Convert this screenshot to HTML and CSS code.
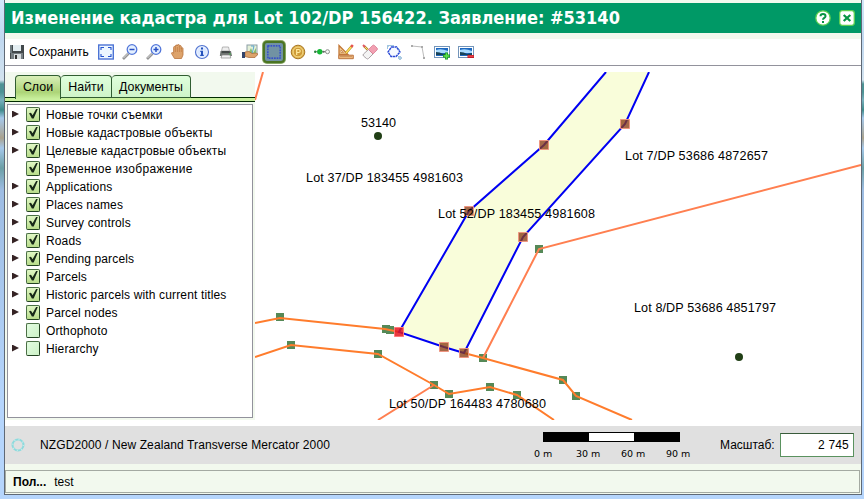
FILE: index.html
```html
<!DOCTYPE html>
<html lang="ru">
<head>
<meta charset="utf-8">
<title>Изменение кадастра</title>
<link rel="stylesheet" href="styles.css">
</head>
<body>
<div class="window">
  <header class="titlebar">
    <h1>Изменение кадастра для Lot 102/DP 156422. Заявление: #53140</h1>
    <svg class="title-btn" viewBox="0 0 16 16"><circle cx="8" cy="8" r="7.2" fill="#fff" stroke="#5ed052" stroke-width="1.3"/><path d="M5.5 6.2C5.5 3.3 10.5 3.3 10.5 6.2C10.5 8 8 7.8 8 9.8M8 11v2" fill="none" stroke="#079443" stroke-width="2"/></svg>
    <svg class="title-btn" viewBox="0 0 16 16"><rect x=".7" y=".7" width="14.6" height="14.6" rx="2.5" fill="#fff" stroke="#5ed052" stroke-width="1.3"/><path d="M4.7 5l6.6 6M11.3 5l-6.6 6" stroke="#079443" stroke-width="2.3"/></svg>
  </header>

  <div class="toolbar">
    <button class="save"><svg class="icon" viewBox="0 0 16 16"><path d="M1 1h14v14H1z" fill="#42484b"/><path d="M4 1h8v6H4z" fill="#e4eef2"/><path d="M2 9h12v6H2z" fill="#777f83"/><path d="M5 10h7v5H5z" fill="#d7dcde"/><path d="M6 11h2v4H6z" fill="#333"/><path d="M1 1h2v8H1z" fill="#707b80"/></svg><span>Сохранить</span></button>
    <button class="tool"><svg class="icon" viewBox="0 0 16 16"><rect x=".7" y="1" width="14.6" height="14" fill="#edf7ff" stroke="#4c73d5" stroke-width="1.4"/><path d="M3 6V3.500h3M10 3.500h3V6M13 10v2.500h-3M6 12.500H3V10" fill="none" stroke="#2453cf" stroke-width="1.1"/></svg></button>
    <button class="tool"><svg class="icon" viewBox="0 0 16 16"><path d="M1 15l5.500-5.500" stroke="#949494" stroke-width="2.600"/><path d="M1.500 14l5-5" stroke="#ddd"/><circle cx="10" cy="5.500" r="4.800" fill="#e4f0ff" stroke="#5377da" stroke-width="1.300"/><path d="M7.500 5.500h5" stroke="#2850c5" stroke-width="1.500"/></svg></button>
    <button class="tool"><svg class="icon" viewBox="0 0 16 16"><path d="M1 15l5.500-5.500" stroke="#949494" stroke-width="2.600"/><path d="M1.500 14l5-5" stroke="#ddd"/><circle cx="10" cy="5.500" r="4.800" fill="#e4f0ff" stroke="#5377da" stroke-width="1.300"/><path d="M7.500 5.500h5M10 3v5" stroke="#2850c5" stroke-width="1.500"/></svg></button>
    <button class="tool"><svg class="icon" viewBox="0 0 16 16"><path d="M4.500 14.500L1.700 9.800C1 8.500 2.700 8 3.600 9.200V3.400c0-1.300 1.800-1.300 1.800 0V2c0-1.300 2-1.300 2 0V1.300c0-1.200 2-1.200 2 0V2.500c0-1.300 1.900-1.200 1.900 0v2c0-1.200 1.700-1.100 1.700 0V11l-1.500 3.500z" fill="#dda36b" stroke="#b9743c" stroke-width=".8"/><path d="M5.400 4v4M7.400 3v5M9.400 3v5M11.300 4v4" stroke="#b9743c" stroke-width=".6"/></svg></button>
    <button class="tool"><svg class="icon" viewBox="0 0 16 16"><circle cx="8" cy="8" r="6.500" fill="#eef4ff" stroke="#5275d1" stroke-width="1.200"/><circle cx="8" cy="8" r="4.800" fill="#dce9ff"/><path d="M7 3.500h2v2H7zM6.300 6.800H9v4h.8v1.300H6.200v-1.300H7V8h-.7z" fill="#2352bd"/></svg></button>
    <button class="tool"><svg class="icon" viewBox="0 0 16 16"><path d="M4.500 3h6l1 4h-8z" fill="#eee" stroke="#999" stroke-width=".7"/><path d="M2.500 7h10.500l1 5H1.800z" fill="#707572"/><path d="M4 7h7.500l.5 2h-8.500z" fill="#424846"/><path d="M4 11h8l.8 3H3z" fill="#f3f3f3" stroke="#888" stroke-width=".7"/><path d="M11 10h2" stroke="#43b34b"/></svg></button>
    <button class="tool"><svg class="icon" viewBox="0 0 16 16"><rect x="5" y="1" width="10" height="10" fill="#e4f0d8" stroke="#8c9ea5"/><path d="M6 10l3-6 2 5 3-5v6z" fill="#87bd70"/><path d="M9 2h3l-2 8" fill="none" stroke="#5ca5cf"/><path d="M3 8l4-.5 3 2 4-.5 2 1-3 3.500H7l-4-1z" fill="#dca36b" stroke="#ae7040" stroke-width=".8"/><path d="M0 8h3v6H0z" fill="#33446b"/></svg></button>
    <button class="tool active"><svg class="icon" viewBox="0 0 16 16"><rect x="1" y="1" width="14" height="14" fill="none" stroke="#2339d5" stroke-width="1.300" stroke-dasharray="2 1"/></svg></button>
    <button class="tool"><svg class="icon" viewBox="0 0 16 16"><circle cx="8" cy="8" r="6.800" fill="#deb24e" stroke="#a87623"/><circle cx="8" cy="8" r="4.900" fill="#cf9b38" stroke="#f6dc8b"/><path d="M6.700 11V5.500h2c2 0 2 3 0 3h-2" fill="none" stroke="#ffeb9e" stroke-width="1.200"/></svg></button>
    <button class="tool"><svg class="icon" viewBox="0 0 16 16"><path d="M1 7.700h14" stroke="#788079"/><circle cx="1.200" cy="7.700" r="1.200" fill="#2a803d"/><circle cx="5.800" cy="7.700" r="2.700" fill="#15b736"/><circle cx="13.500" cy="7.700" r="2" fill="#f6f6f6" stroke="#8b918b"/><circle cx="9.600" cy="7.700" r="1" fill="#666"/></svg></button>
    <button class="tool"><svg class="icon" viewBox="0 0 16 16"><path d="M1 1.500l9 9H1z" fill="#f0c991" stroke="#c37736" stroke-width="1.300"/><path d="M3 6v2.500h2.500z" fill="#fff" stroke="#c37736" stroke-width=".7"/><path d="M.7 11.200h14.600v3.500H.7z" fill="#edb67a" stroke="#bc7540"/><path d="M3 12v1M5 12v1M7 12v1M9 12v1M11 12v1M13 12v1" stroke="#865123" stroke-width=".6"/><path d="M8 9l6-7" stroke="#b48a22" stroke-width="2.600"/><path d="M8 9l6-7" stroke="#ffe25c" stroke-width="1.200"/><path d="M13.200 3l1.600-2" stroke="#e6504e" stroke-width="2.500"/></svg></button>
    <button class="tool"><svg class="icon" viewBox="0 0 16 16"><path d="M2 2l6 6" stroke="#af8728" stroke-width="2.400"/><path d="M2 2l6 6" stroke="#f9df72"/><path d="M1 1l2 2" stroke="#e25a65" stroke-width="2"/><path d="M1.500 10l5-4.500 4.500 4.500-4.500 4.500q-1 1-2 0l-3-2.500q-1-1 0-2z" fill="#f4f4f4" stroke="#a9a2a5"/><path d="M6.500 5.500l4-4q1-1 2 0l2.500 2.500q1 1 0 2l-4 4z" fill="#f2a0b2" stroke="#d87c92" stroke-width=".8"/></svg></button>
    <button class="tool"><svg class="icon" viewBox="0 0 16 16"><path d="M1.500 5V1.500H8M10 2l4 4M11 11l3 3" stroke="#9fc3df" fill="none"/><path d="M5.500 3h5l3.500 5-4 4.500H5L2 8z" fill="#f7faff" stroke="#2948d5" stroke-width="1.400" stroke-dasharray="2.500 .5"/><circle cx="2" cy="2" r="1" fill="#9fc3df"/><circle cx="14" cy="14" r="1.300" fill="#fff" stroke="#75a8cf"/></svg></button>
    <button class="tool"><svg class="icon" viewBox="0 0 16 16"><path d="M2 2l10 1 2 11" fill="none" stroke="#bbb"/><path d="M1 1h2v2H1zM11 2h2v2h-2zM13 13h2v2h-2z" fill="#aaa"/></svg></button>
    <button class="tool"><svg class="icon" viewBox="0 0 16 16"><rect x=".5" y="2.500" width="15" height="11" fill="#fff" stroke="#7395ba"/><path d="M2 4h12v8H2z" fill="#1d68c0"/><path d="M2 6q5-2 12 1v2H2z" fill="#a8dbff"/><path d="M2 8q4 0 7 2l5-1v2H2z" fill="#174359"/><path d="M12.500 8.500v7M9 12h7" stroke="#168d25" stroke-width="3"/><path d="M12.500 9.200v5.600M9.700 12h5.600" stroke="#5ce34e" stroke-width="1.600"/></svg></button>
    <button class="tool"><svg class="icon" viewBox="0 0 16 16"><rect x=".5" y="2.500" width="15" height="11" fill="#fff" stroke="#7395ba"/><path d="M2 4h12v8H2z" fill="#1d68c0"/><path d="M2 6q5-2 12 1v2H2z" fill="#a8dbff"/><path d="M2 8q4 0 7 2l5-1v2H2z" fill="#174359"/><path d="M9.500 12.500h6.500" stroke="#c51c28" stroke-width="3"/><path d="M10 12.200h5.500" stroke="#f25555"/></svg></button>
  </div>

  <main class="workspace">
    <aside class="sidebar">
      <nav class="tabs"><span class="tab layers selected">Слои</span><span class="tab find">Найти</span><span class="tab docs">Документы</span></nav>
      <ul class="tree">
        <li><i class="arrow"></i><b class="check on"></b><span>Новые точки съемки</span></li>
        <li><i class="arrow"></i><b class="check on"></b><span>Новые кадастровые объекты</span></li>
        <li><i class="arrow"></i><b class="check on"></b><span>Целевые кадастровые объекты</span></li>
        <li><i class="arrow none"></i><b class="check on"></b><span class="loose">Временное изображение</span></li>
        <li><i class="arrow"></i><b class="check on"></b><span>Applications</span></li>
        <li><i class="arrow"></i><b class="check on"></b><span>Places names</span></li>
        <li><i class="arrow"></i><b class="check on"></b><span>Survey controls</span></li>
        <li><i class="arrow"></i><b class="check on"></b><span>Roads</span></li>
        <li><i class="arrow"></i><b class="check on"></b><span>Pending parcels</span></li>
        <li><i class="arrow"></i><b class="check on"></b><span>Parcels</span></li>
        <li><i class="arrow"></i><b class="check on"></b><span>Historic parcels with current titles</span></li>
        <li><i class="arrow"></i><b class="check on"></b><span>Parcel nodes</span></li>
        <li><i class="arrow none"></i><b class="check"></b><span>Orthophoto</span></li>
        <li><i class="arrow"></i><b class="check"></b><span>Hierarchy</span></li>
      </ul>
    </aside>
    <svg class="map" viewBox="255 72 606 348">
      <path class="selected-parcel" d="M606 72L544 145 469 211 399 332 444 347 464 353 523 237 625 124 649 72z"/>
      <g class="nodes">
        <path d="M276 313h8v8h-8zM382 325h8v8h-8zM386 326h8v8h-8zM287 341h8v8h-8zM374 350h8v8h-8zM430 381h8v8h-8zM445 390h8v8h-8zM486 383h8v8h-8zM513 391h8v8h-8zM479 354h8v8h-8zM559 376h8v8h-8zM572 392h8v8h-8zM535 245h8v8h-8z"/>
      </g>
      <g class="boundaries">
        <path class="coral" d="M263 72L255 100M861 165L539 249 483 358M434 385L378 420"/>
        <path d="M255 323L280 318 385 329 399 332M464 353L483 358 563 380 576 396 632 420M255 357L291 345 378 354 434 385 449 394 490 387 517 395 554 420"/>
      </g>
      <path class="outline" d="M606 72L544 145 469 211 399 332 444 347 464 353 523 237 625 124 649 72"/>
      <path class="vertices" d="M539.500 140.500h9v9h-9zM464.500 206.500h9v9h-9zM518.500 232.500h9v9h-9zM620.500 119.500h9v9h-9zM439.500 342.500h9v9h-9zM459.500 348.500h9v9h-9z"/>
      <path class="active-vertex" d="M394.500 327.500h9v9h-9z"/>
      <circle cx="378" cy="136" r="4" fill="#213f16"/><circle cx="739" cy="357" r="4" fill="#213f16"/>
      <g class="labels">
        <text x="361" y="127" textLength="35">53140</text>
        <text x="306" y="182" textLength="157">Lot 37/DP 183455 4981603</text>
        <text x="438" y="218" textLength="157">Lot 52/DP 183455 4981608</text>
        <text x="625" y="160" textLength="143">Lot 7/DP 53686 4872657</text>
        <text x="634" y="312" textLength="142">Lot 8/DP 53686 4851797</text>
        <text x="389" y="408" textLength="157">Lot 50/DP 164483 4780680</text>
      </g>
    </svg>
  </main>

  <div class="mapinfo">
    <svg class="busy" viewBox="0 0 14 14"><circle cx="7" cy="7" r="5.500" fill="none" stroke="#8edadd" stroke-width="2"/><circle cx="7" cy="7" r="5.500" fill="none" stroke="#c5eeec" stroke-width="1.500" stroke-dasharray="1 3.300"/></svg>
    <span class="crs">NZGD2000 / New Zealand Transverse Mercator 2000</span>
    <div class="scalebar"><div class="bar"><i></i></div><div class="ticks"><span>0 m</span><span>30 m</span><span>60 m</span><span>90 m</span></div></div>
    <span class="scale-label">Масштаб:</span><div class="scale-value">2 745</div>
  </div>
  <footer class="status"><strong>Пол...</strong><span>test</span></footer>
</div>
</body>
</html>
```

FILE: styles.css
```css
* { box-sizing: border-box; }
body {
  margin: 0;
  width: 864px;
  height: 499px;
  overflow: hidden;
  padding: 0 2px 4px 4px;
  background: linear-gradient(180deg, #d3e7f9 0, #c0d8f0 40px, #d3e3ef 80px, #4d9294 84px, #4d9294 92px, #78b0bd 100px, #3e8a8a 110px, #a5c8ea 118px, #a9a28e 138px, #a5c8ea 148px, #6b9fa5 168px, #9dbce2 190px, #b5d5fc 400px, #b5d5fc 499px);
  font: 12px "Liberation Sans", Arial, sans-serif;
  color: #000;
}
.window {
  display: flex;
  flex-direction: column;
  height: 495px;
  padding-top: 3px;
  border: solid #5f6976;
  border-width: 0 1px 1px;
  background: #f2f9ee;
}
.titlebar {
  display: flex;
  align-items: center;
  height: 30px;
  flex: none;
  padding: 0 6px;
  background: #009966;
}
h1 {
  flex: 1;
  margin: 0;
  font: bold 18px/30px "DejaVu Sans Condensed", "DejaVu Sans", sans-serif;
  font-stretch: condensed;
  color: #fff;
  white-space: nowrap;
}
.title-btn { width: 16px; height: 16px; margin-left: 8px; }
.toolbar {
  display: flex;
  align-items: center;
  flex: none;
  height: 27px;
  margin-top: 6px;
  padding-left: 4px;
  background: #fff;
  border-bottom: 1px solid #92929c;
}
button {
  display: flex;
  align-items: center;
  justify-content: center;
  padding: 0;
  border: 0;
  background: none;
  font: inherit;
}
.save { width: 85px; justify-content: flex-start; gap: 4px; }
.tool { width: 24px; height: 24px; flex: none; }
.icon { width: 16px; height: 16px; flex: none; }
.active .icon { width: 22px; height: 22px; padding: 2px; border: 2px solid #4b7423; border-radius: 4px; background: #7192a3; box-shadow: 0 0 0 1px #87a764; }
.workspace { display: flex; flex: none; height: 354px; padding-top: 6px; background: #fff; }
.sidebar { width: 250px; height: 348px; padding: 3px 2px 0; background: #f2f9ee; }
.tabs {
  display: flex;
  height: 27px;
  margin: 0 -2px 2px;
  padding-left: 10px;
  background: linear-gradient(#002b00, #002b00) 0 22px / 100% 1px no-repeat, linear-gradient(#c9f09d, #c9f09d) 0 23px / 100% 3px no-repeat, linear-gradient(#002b00, #002b00) 0 26px / 100% 1px no-repeat;
}
.tab {
  height: 23px;
  padding-top: 4px;
  border: 1px solid #315d32;
  border-left-width: 0;
  border-radius: 4px 4px 0 0;
  background: linear-gradient(#dfffdc, #cff4c9);
  font-size: 12.400px;
  text-align: center;
}
.layers { width: 46px; border-left-width: 1px; }
.find { width: 51px; }
.docs { width: 79px; }
.selected { height: 24px; border-bottom: 0; background: linear-gradient(#d9efb9, #acd477 70%, #c9f09d); }
.tree { height: 314px; margin: 0; padding: 0 0 0 4px; list-style: none; background: #fff; border: 1px solid #92929c; letter-spacing: .14px; }
.tree li { display: flex; align-items: center; height: 18px; white-space: nowrap; }
.tree span { padding-top: 1px; }
.tree .loose { letter-spacing: .33px; }
.arrow { width: 7px; height: 7px; margin-right: 7px; background: #352324; clip-path: polygon(0 0, 100% 50%, 0 100%); }
.none { visibility: hidden; }
.check { position: relative; width: 14px; height: 15px; margin-right: 6px; border: 1px solid #4b7045; border-right-color: #234322; border-bottom-color: #234322; border-radius: 2px; background: linear-gradient(135deg, #e2fce0, #cdf1c7); }
.on { background: linear-gradient(#e0f7c5, #b8dc8a); }
.on::after { content: ""; position: absolute; left: 2px; top: 1px; width: 9px; height: 10px; background: #172818; clip-path: polygon(0 48%, 22% 42%, 40% 68%, 82% 0, 100% 0, 52% 100%, 32% 100%); }
.map { display: block; width: 606px; height: 348px; background: #fff; }
.selected-parcel { fill: #f9fdda; }
.outline { fill: none; stroke: #0000f2; stroke-width: 2; }
.boundaries { fill: none; stroke: #ff7c2c; stroke-width: 2; }
.boundaries .coral { stroke: #ff7f50; }
.nodes { fill: #558957; }
.vertices { fill: #8b3d14; fill-opacity: .78; stroke: #ee9580; }
.active-vertex { fill: #e51820; fill-opacity: .85; stroke: #ff7777; }
.labels { font-size: 12.600px; }
.mapinfo { display: flex; flex: none; align-items: center; height: 38px; margin-top: 6px; padding: 0 7px 0 6px; background: #e0e0e0; box-shadow: 0 -6px #fff; }
.busy { width: 14px; height: 14px; margin-right: 15px; }
.crs { flex: none; width: 494px; letter-spacing: .11px; }
.scalebar { width: 160px; height: 28px; flex: none; }
.bar { width: 137px; height: 10px; margin: 1px 0 0 9px; padding: 1px; background: #000; }
.bar i { display: block; width: 45px; height: 8px; margin-left: 45px; background: #fff; }
.ticks { display: grid; grid-template-columns: 42px 45px 45px 30px; margin-top: 6px; font: 9.500px/12px "DejaVu Sans", sans-serif; white-space: nowrap; }
.scale-label { width: 60px; margin-left: 26px; flex: none; }
.scale-value { width: 74px; height: 24px; flex: none; padding-right: 4px; border: 1px solid #5a925f; border-top-color: #395b3b; background: #fff; line-height: 23px; text-align: right; letter-spacing: .2px; }
.status { display: flex; align-items: center; gap: 8px; flex: none; height: 23px; margin: 6px 1px 0 0; padding-left: 7px; border: 1px solid #a4aaa2; background: #f2f9ee; }
```
